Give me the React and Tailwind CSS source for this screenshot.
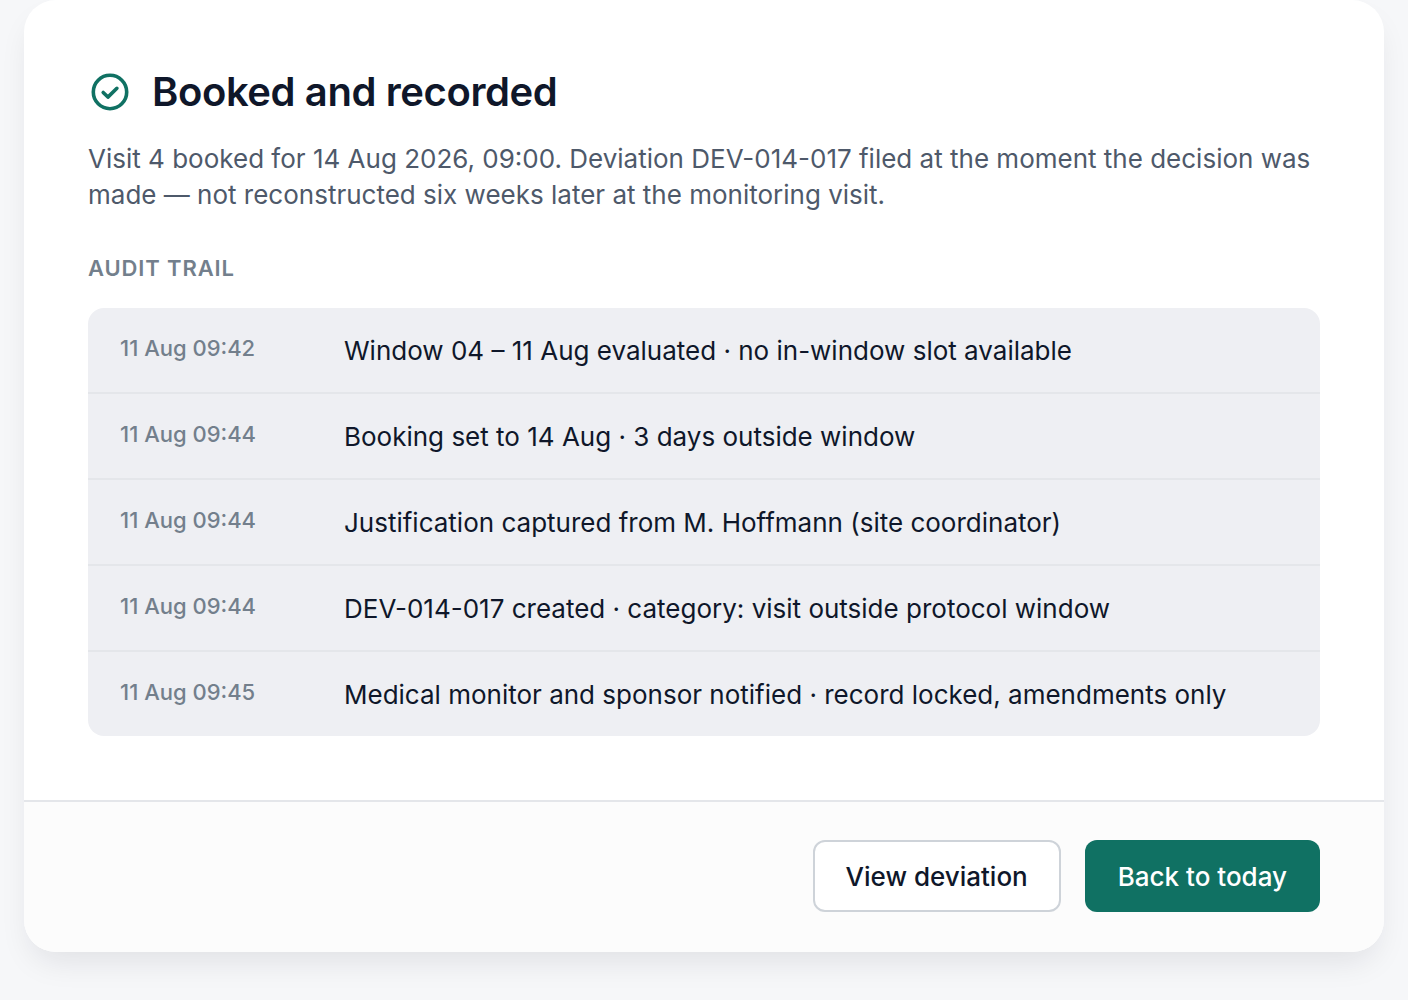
import React from 'react';

const auditTrail = [
    { time: '11 Aug 09:42', text: 'Window 04 – 11 Aug evaluated · no in-window slot available' },
    { time: '11 Aug 09:44', text: 'Booking set to 14 Aug · 3 days outside window' },
    { time: '11 Aug 09:44', text: 'Justification captured from M. Hoffmann (site coordinator)' },
    { time: '11 Aug 09:44', text: 'DEV-014-017 created · category: visit outside protocol window' },
    { time: '11 Aug 09:45', text: 'Medical monitor and sponsor notified · record locked, amendments only' },
];

const CheckIcon = () => (
    <svg className="w-11 h-11 shrink-0" viewBox="0 0 44 44" fill="none" stroke="#107163" strokeWidth="3.6" strokeLinecap="round" strokeLinejoin="round" aria-hidden="true">
        <circle cx="22" cy="22" r="16.7" />
        <path d="M15.2 22.4l4.7 4.7 9-8.8" />
    </svg>
);

const App = () => {
    return (
        <main className="min-h-screen bg-[#f6f7f9] px-6 pb-12 font-['Inter',sans-serif] text-[#0f172a]">
            <section className="rounded-[32px] overflow-hidden bg-white shadow-[0_16px_32px_-8px_rgba(17,24,39,0.1)]">
                {/* Body */}
                <div className="p-16">
                    <div className="flex items-center gap-5">
                        <CheckIcon />
                        <h1 className="text-[40px] leading-14 font-semibold tracking-[-0.01em]">Booked and recorded</h1>
                    </div>
                    <p className="mt-[21px] text-[26px] leading-9 text-[#4e596a]">
                        Visit 4 booked for 14 Aug 2026, 09:00. Deviation DEV-014-017 filed at the moment the decision was made — not reconstructed six weeks later at the monitoring visit.
                    </p>

                    <h2 className="mt-[39px] text-[22px] leading-8 font-semibold uppercase tracking-[0.04em] text-[#737f8c]">Audit trail</h2>
                    <ul className="mt-6 rounded-2xl bg-[#eeeff3] divide-y-2 divide-[#e4e6ea]">
                        {auditTrail.map((entry, index) => (
                            <li key={index} className="flex gap-8 px-8 pt-6 pb-[22px]">
                                <time className="w-48 shrink-0 text-[22px] leading-8 font-medium text-[#737f8c]">{entry.time}</time>
                                <span className="text-[26px] leading-[38px]">{entry.text}</span>
                            </li>
                        ))}
                    </ul>
                </div>

                {/* Actions */}
                <div className="flex justify-end gap-6 border-t-2 border-[#e4e6ea] bg-[#fcfcfc] px-16 pt-[38px] pb-10">
                    <button type="button" className="h-18 rounded-xl border-2 border-[#ced3d9] bg-white px-[31px] text-[26px] font-medium">View deviation</button>
                    <button type="button" className="h-18 rounded-xl bg-[#107163] px-[33px] text-[26px] font-medium text-white">Back to today</button>
                </div>
            </section>
        </main>
    );
};

export default App;
